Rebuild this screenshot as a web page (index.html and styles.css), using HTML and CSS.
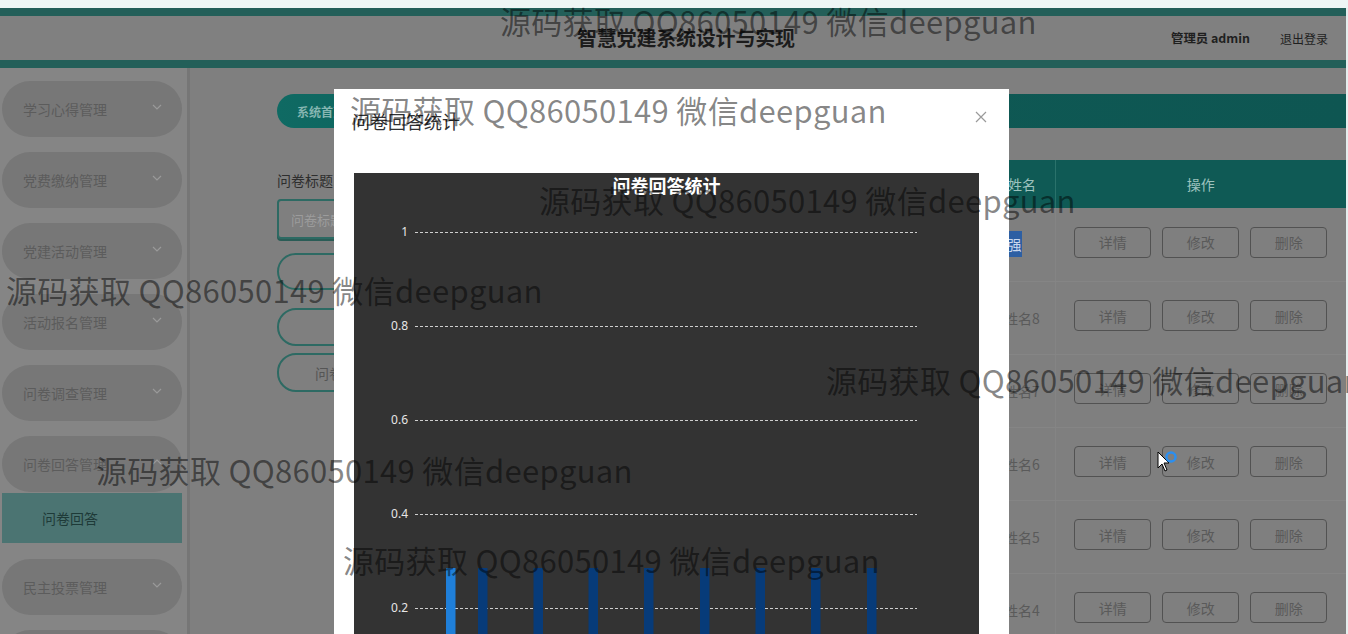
FILE: index.html
```html
<!DOCTYPE html>
<html lang="zh">
<head>
<meta charset="utf-8">
<title>智慧党建系统设计与实现</title>
<link rel="stylesheet" href="styles.css">
</head>
<body>
<div class="page">
  <div class="topstrip"></div>
  <header class="header">
    <h1 class="title">智慧党建系统设计与实现</h1>
    <div class="user"><b>管理员 admin</b><span class="logout">退出登录</span></div>
  </header>
  <div class="layout">
    <aside class="sidebar">
      <div class="menu-item">学习心得管理<svg class="chev" viewBox="0 0 10 6"><path d="M1 1 L5 5 L9 1"/></svg></div>
      <div class="menu-item">党费缴纳管理<svg class="chev" viewBox="0 0 10 6"><path d="M1 1 L5 5 L9 1"/></svg></div>
      <div class="menu-item">党建活动管理<svg class="chev" viewBox="0 0 10 6"><path d="M1 1 L5 5 L9 1"/></svg></div>
      <div class="menu-item">活动报名管理<svg class="chev" viewBox="0 0 10 6"><path d="M1 1 L5 5 L9 1"/></svg></div>
      <div class="menu-item">问卷调查管理<svg class="chev" viewBox="0 0 10 6"><path d="M1 1 L5 5 L9 1"/></svg></div>
      <div class="menu-item open">问卷回答管理<svg class="chev" viewBox="0 0 10 6"><path d="M1 5 L5 1 L9 5"/></svg></div>
      <div class="sub-item">问卷回答</div>
      <div class="menu-item">民主投票管理<svg class="chev" viewBox="0 0 10 6"><path d="M1 1 L5 5 L9 1"/></svg></div>
      <div class="menu-item">投票记录管理<svg class="chev" viewBox="0 0 10 6"><path d="M1 1 L5 5 L9 1"/></svg></div>
    </aside>
    <main class="main">
      <div class="crumb"><span class="crumb-home">系统首页</span><span class="crumb-sep">/</span><span class="crumb-cur">问卷回答</span></div>
      <div class="content">
        <div class="form">
          <label class="form-label">问卷标题</label>
          <input class="form-input" placeholder="问卷标题">
          <button class="form-btn btn-first">查询</button>
          <button class="form-btn btn-second">删除</button>
          <button class="form-btn btn-third">问卷回答统计</button>
        </div>
        <table class="grid">
          <colgroup>
            <col class="c-sel"><col class="c-a"><col class="c-b"><col class="c-c"><col class="c-name"><col class="c-op">
          </colgroup>
          <thead>
            <tr><th></th><th>问卷标题</th><th>问卷答案</th><th>用户账号</th><th>姓名</th><th>操作</th></tr>
          </thead>
          <tbody>
            <tr><td></td><td>问卷标题9</td><td>答案9</td><td>用户9</td><td class="name name-sel">李<span class="sel">强</span></td><td><div class="ops"><button>详情</button><button>修改</button><button>删除</button></div></td></tr>
            <tr><td></td><td>问卷标题8</td><td>答案8</td><td>用户8</td><td class="name">姓名8</td><td><div class="ops"><button>详情</button><button>修改</button><button>删除</button></div></td></tr>
            <tr><td></td><td>问卷标题7</td><td>答案7</td><td>用户7</td><td class="name">姓名7</td><td><div class="ops"><button>详情</button><button>修改</button><button>删除</button></div></td></tr>
            <tr><td></td><td>问卷标题6</td><td>答案6</td><td>用户6</td><td class="name">姓名6</td><td><div class="ops"><button>详情</button><button>修改</button><button>删除</button></div></td></tr>
            <tr><td></td><td>问卷标题5</td><td>答案5</td><td>用户5</td><td class="name">姓名5</td><td><div class="ops"><button>详情</button><button>修改</button><button>删除</button></div></td></tr>
            <tr><td></td><td>问卷标题4</td><td>答案4</td><td>用户4</td><td class="name">姓名4</td><td><div class="ops"><button>详情</button><button>修改</button><button>删除</button></div></td></tr>
          </tbody>
        </table>
      </div>
    </main>
  </div>
  <div class="rightedge"></div>
</div>

<svg class="cursor" width="30" height="24" viewBox="0 0 30 24">
  <path d="M1 1 L1 17 L5 13 L8 20 L10 19 L7 12 L12 12 Z" fill="#fff" stroke="#000" stroke-width="1"/>
  <circle cx="14" cy="6" r="4.5" fill="none" stroke="#2b8ff0" stroke-width="2.5"/>
</svg>

<div class="modal">
  <div class="modal-head">
    <span class="modal-title">问卷回答统计</span>
    <svg class="modal-close" width="12" height="12" viewBox="0 0 12 12"><path d="M1 1 L11 11 M11 1 L1 11"/></svg>
  </div>
  <div class="modal-body">
    <svg class="chart" width="625" height="600" viewBox="0 0 625 600">
      <rect x="0" y="0" width="625" height="600" fill="#333"/>
      <text class="ch-title" x="312.5" y="20" text-anchor="middle">问卷回答统计</text>
      <g class="ch-grid">
        <line x1="61" y1="59.5" x2="563" y2="59.5"/>
        <line x1="61" y1="153.5" x2="563" y2="153.5"/>
        <line x1="61" y1="247.5" x2="563" y2="247.5"/>
        <line x1="61" y1="341.5" x2="563" y2="341.5"/>
        <line x1="61" y1="435.5" x2="563" y2="435.5"/>
      </g>
      <g class="ch-axis">
        <text x="54" y="63" text-anchor="end">1</text>
        <text x="54" y="157" text-anchor="end">0.8</text>
        <text x="54" y="251" text-anchor="end">0.6</text>
        <text x="54" y="345" text-anchor="end">0.4</text>
        <text x="54" y="439" text-anchor="end">0.2</text>
      </g>
      <rect x="92" y="395" width="9.5" height="134" fill="#1f7fd9"/>
      <g class="ch-bars">
        <rect x="124" y="395" width="9.5" height="134"/>
        <rect x="179.5" y="395" width="9.5" height="134"/>
        <rect x="234.5" y="395" width="9.5" height="134"/>
        <rect x="290" y="395" width="9.5" height="134"/>
        <rect x="346" y="395" width="9.5" height="134"/>
        <rect x="401.5" y="395" width="9.5" height="134"/>
        <rect x="457" y="395" width="9.5" height="134"/>
        <rect x="513" y="395" width="9.5" height="134"/>
      </g>
    </svg>
  </div>
</div>

<div class="wm wm1">源码获取 QQ86050149 微信deepguan</div>
<div class="wm wm2">源码获取 QQ86050149 微信deepguan</div>
<div class="wm wm3">源码获取 QQ86050149 微信deepguan</div>
<div class="wm wm4">源码获取 QQ86050149 微信deepguan</div>
<div class="wm wm5">源码获取 QQ86050149 微信deepguan</div>
<div class="wm wm6">源码获取 QQ86050149 微信deepguan</div>
<div class="wm wm7">源码获取 QQ86050149 微信deepguan</div>
</body>
</html>
```

FILE: styles.css
```css
* { box-sizing: border-box; }
html, body { margin: 0; padding: 0; }
body {
  width: 1348px;
  height: 634px;
  overflow: hidden;
  position: relative;
  background: #7f7f7f;
  font-family: "Noto Sans CJK SC", "Noto Sans", sans-serif;
  color: #333;
}
.page {
  position: relative;
  width: 1348px;
  height: 634px;
  display: flex;
  flex-direction: column;
}
.topstrip { height: 8px; background: #eef6f5; flex: none; }
.header {
  flex: none;
  height: 60px;
  border-top: 8px solid #235f59;
  border-bottom: 8px solid #235f59;
  background: #808080;
  display: flex;
  align-items: center;
}
.title {
  margin: 0 0 0 577px;
  font-size: 20px;
  line-height: 28px;
  font-weight: 700;
  color: #1c1c1c;
  letter-spacing: -0.2px;
}
.user {
  margin-left: auto;
  margin-right: 20px;
  display: flex;
  align-items: center;
  gap: 30px;
  font-size: 13px;
  color: #1f1f1f;
}
.user b { font-weight: 700; font-size: 12.4px; }
.logout { font-size: 12px; }

.layout { flex: 1; display: flex; min-height: 0; }
.sidebar {
  width: 190px;
  flex: none;
  background: #858585;
  border-right: 3px solid #767676;
  padding: 13px 5px 0 2px;
  overflow: hidden;
}
.menu-item {
  height: 56px;
  border-radius: 28px;
  background: #777;
  margin-bottom: 15px;
  display: flex;
  align-items: center;
  padding-left: 21px;
  font-size: 14px;
  color: #5c5c5c;
  position: relative;
}
.menu-item.open { margin-bottom: 1px; }
.chev {
  position: absolute;
  left: 150px;
  top: 23px;
  width: 10px;
  height: 6px;
  fill: none;
  stroke: #9a9a9a;
  stroke-width: 1.2;
}
.sub-item {
  height: 50px;
  background: #4b7472;
  margin-bottom: 16px;
  display: flex;
  align-items: center;
  padding-left: 40px;
  font-size: 14px;
  color: #1e3a38;
}

.main {
  flex: 1;
  padding: 26px 2px 0 87px;
  min-width: 0;
}
.crumb {
  height: 34px;
  border-radius: 17px 0 0 17px;
  background: linear-gradient(90deg, #0f6a63 0%, #0f5a55 30%, #0e5652 100%);
  display: flex;
  align-items: center;
  padding-left: 20px;
  font-size: 12px;
  color: #86b6b1;
  gap: 8px;
}
.crumb-home { font-weight: 700; }
.content {
  margin-top: 32px;
  display: flex;
  align-items: flex-start;
}
.form {
  width: 212px;
  flex: none;
  padding-top: 10px;
  display: flex;
  flex-direction: column;
  align-items: flex-start;
}
.form-label { font-size: 14px; line-height: 20px; color: #2e2e2e; }
.form-input {
  margin-top: 9px;
  width: 180px;
  height: 40px;
  border: 2px solid #2d6a63;
  border-radius: 4px;
  box-shadow: 0 2px 0 #2a5c56;
  background: #7f7f7f;
  padding-left: 12px;
  font-family: inherit;
  font-size: 13px;
  outline: none;
}
.form-input::placeholder { color: #9c9c9c; }
.form-btn {
  width: 160px;
  height: 37px;
  border: 2px solid #2d6a63;
  border-radius: 19px;
  background: #7f7f7f;
  font-family: inherit;
  font-size: 14px;
  color: #555;
  text-align: center;
  padding: 0;
}
.btn-first { margin-top: 14px; }
.btn-second { margin-top: 18px; height: 38px; }
.btn-third { margin-top: 7px; height: 39px; }

.grid {
  flex: 1;
  border-collapse: collapse;
  table-layout: fixed;
  font-size: 14px;
  color: #5a5a5a;
}
.c-sel { width: 50px; }
.c-a { width: 150px; }
.c-b { width: 140px; }
.c-c { width: 160px; }
.c-name { width: 66px; }
.c-op { width: 291px; }
.grid thead th {
  height: 48px;
  background: #0f5a55;
  color: #9cc2be;
  font-weight: 400;
  font-size: 14px;
  text-align: center;
  border-right: 1px solid #2a726b;
}
.grid thead th:last-child { border-right: none; }
.grid tbody td {
  height: 73px;
  text-align: center;
  border-bottom: 1px solid #858585;
  border-right: 1px solid #848484;
  white-space: nowrap;
  padding: 0;
}
.grid tbody td:last-child { border-right: none; }
.name-sel { text-align: right !important; padding-right: 33px !important; }
.sel { background: #2d5fa3; color: #c9d8ee; padding: 3px 0; }
.ops {
  display: flex;
  justify-content: center;
  align-items: center;
  gap: 11px;
  margin-top: -4px;
}
.ops button {
  width: 77px;
  height: 31px;
  border: 1px solid #525252;
  border-radius: 4px;
  background: transparent;
  font-family: inherit;
  font-size: 14px;
  color: #5a5a5a;
  padding: 0;
}

.rightedge {
  position: absolute;
  right: 0;
  top: 8px;
  bottom: 0;
  width: 2px;
  background: #e6eeee;
}

.cursor { position: absolute; left: 1157px; top: 451px; }

.modal {
  position: absolute;
  left: 334px;
  top: 89px;
  width: 675px;
  height: 700px;
  background: #fff;
}
.modal-head {
  position: relative;
  padding: 20px 20px 10px 18px;
}
.modal-title { font-size: 18px; line-height: 24px; color: #303133; display: block; }
.modal-close {
  position: absolute;
  top: 22px;
  right: 22px;
  fill: none;
  stroke: #9a9a9a;
  stroke-width: 1.2;
}
.modal-body { padding: 30px 20px; }
.chart { display: block; }
.ch-title { fill: #fff; font-size: 18px; font-weight: 700; font-family: "Noto Sans CJK SC", sans-serif; }
.ch-grid line { stroke: #cfcfcf; stroke-width: 1; stroke-dasharray: 3 2; }
.ch-axis text { fill: #e6e6e6; font-size: 12px; font-family: "Noto Sans", sans-serif; }
.ch-bars rect { fill: #073b79; }

.wm {
  position: absolute;
  font-size: 31px;
  line-height: 36px;
  letter-spacing: 0.3px;
  white-space: nowrap;
  color: rgba(0, 0, 0, 0.48);
  font-family: "Noto Sans CJK SC", sans-serif;
  pointer-events: none;
}
.wm1 { left: 500px; top: 3px; }
.wm2 { left: 350px; top: 92px; }
.wm3 { left: 539px; top: 182px; }
.wm4 { left: 6px; top: 272px; }
.wm5 { left: 826px; top: 362px; }
.wm6 { left: 96px; top: 452px; }
.wm7 { left: 343px; top: 542px; }
```
